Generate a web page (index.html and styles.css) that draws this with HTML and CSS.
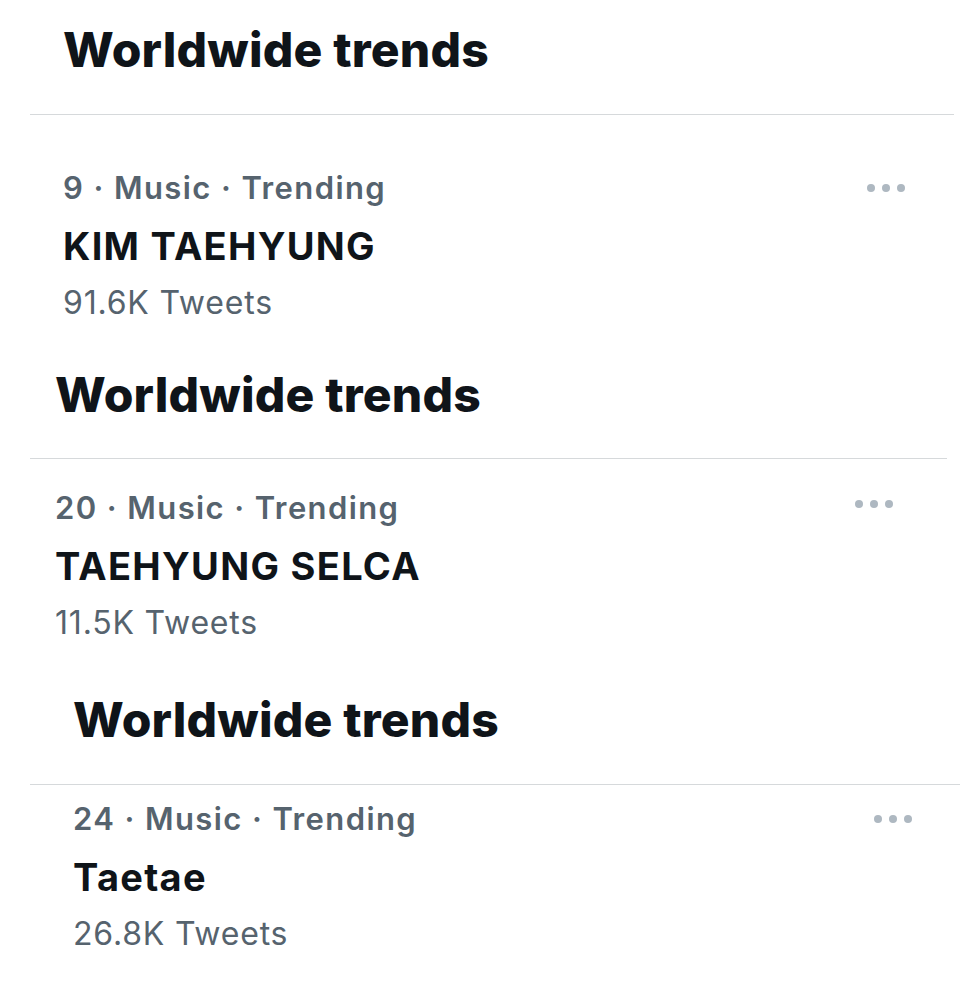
FILE: index.html
```html
<!DOCTYPE html>
<html lang="en">
<head>
<meta charset="utf-8">
<title>Worldwide trends</title>
<link rel="stylesheet" href="styles.css">
</head>
<body>
<main class="feed">
  <section class="panel panel-1">
    <h2 class="panel-title">Worldwide trends</h2>
    <div class="divider"></div>
    <div class="trend">
      <div class="trend-body">
        <div class="trend-meta">9 · Music · Trending</div>
        <div class="trend-name">KIM TAEHYUNG</div>
        <div class="trend-count">91.6K Tweets</div>
      </div>
      <button class="more" aria-label="More"><span></span><span></span><span></span></button>
    </div>
  </section>

  <section class="panel panel-2">
    <h2 class="panel-title">Worldwide trends</h2>
    <div class="divider"></div>
    <div class="trend">
      <div class="trend-body">
        <div class="trend-meta">20 · Music · Trending</div>
        <div class="trend-name">TAEHYUNG SELCA</div>
        <div class="trend-count">11.5K Tweets</div>
      </div>
      <button class="more more-raised" aria-label="More"><span></span><span></span><span></span></button>
    </div>
  </section>

  <section class="panel panel-3">
    <h2 class="panel-title">Worldwide trends</h2>
    <div class="divider"></div>
    <div class="trend">
      <div class="trend-body">
        <div class="trend-meta">24 · Music · Trending</div>
        <div class="trend-name">Taetae</div>
        <div class="trend-count">26.8K Tweets</div>
      </div>
      <button class="more" aria-label="More"><span></span><span></span><span></span></button>
    </div>
  </section>
</main>
</body>
</html>
```

FILE: styles.css
```css
* {
  box-sizing: border-box;
}

html,
body {
  margin: 0;
  padding: 0;
  background: #ffffff;
}

body {
  font-family: Inter, "Liberation Sans", Arial, sans-serif;
  color: #0f1419;
}

.feed {
  display: flex;
  flex-direction: column;
}

.panel {
  margin-left: 30px;
}

.panel-1 {
  width: 924px;
  padding-top: 20px;
  padding-bottom: 22px;
  --inset: 33px;
  --right: 49px;
  --title-gap: 34px;
  --item-top: 53px;
}

.panel-2 {
  width: 917px;
  padding-top: 20px;
  padding-bottom: 27px;
  --inset: 25px;
  --right: 54px;
  --title-gap: 33px;
  --item-top: 29px;
}

.panel-3 {
  width: 930px;
  padding-top: 20px;
  padding-bottom: 20px;
  --inset: 43px;
  --right: 48px;
  --title-gap: 34px;
  --item-top: 14px;
}

.panel-title {
  margin: 0 0 var(--title-gap);
  padding-left: var(--inset);
  font-size: 48px;
  line-height: 60px;
  font-weight: 800;
  letter-spacing: 0.2px;
  color: #0f1419;
}

.divider {
  height: 1px;
  background: #d6d9db;
}

.trend {
  display: flex;
  justify-content: space-between;
  align-items: flex-start;
  padding: var(--item-top) var(--right) 0 var(--inset);
}

.trend-body {
  display: flex;
  flex-direction: column;
}

.trend-meta {
  font-size: 31px;
  line-height: 40px;
  font-weight: 600;
  letter-spacing: 1.4px;
  color: #56636e;
}

.trend-name {
  margin-top: 14px;
  font-size: 38px;
  line-height: 48px;
  font-weight: 700;
  letter-spacing: 1.3px;
  color: #0f1419;
}

.trend-count {
  margin-top: 13px;
  font-size: 32px;
  line-height: 40px;
  font-weight: 400;
  letter-spacing: 0.8px;
  color: #56636e;
}

.more {
  display: flex;
  align-items: center;
  gap: 7px;
  height: 40px;
  margin: 0;
  padding: 0;
  border: 0;
  background: none;
}

.more-raised {
  margin-top: -4px;
}

.more span {
  display: block;
  width: 8px;
  height: 8px;
  border-radius: 50%;
  background: #aeb8c1;
}
```
